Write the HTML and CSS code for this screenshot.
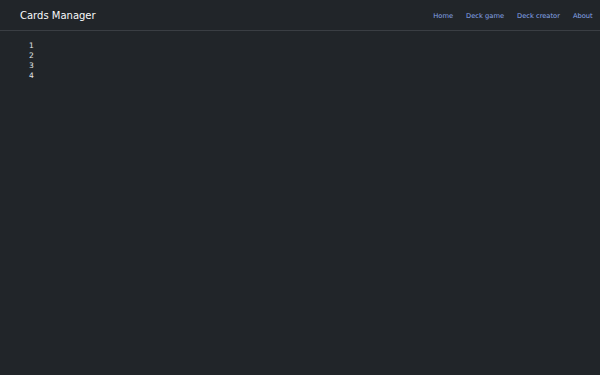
FILE: index.html
```html
<!DOCTYPE html>
<html lang="en">
<head>
<meta charset="utf-8">
<title>Cards Manager</title>
<link rel="stylesheet" href="styles.css">
</head>
<body>
<header class="navbar">
  <a class="brand" href="#">Cards Manager</a>
  <nav class="nav">
    <a class="nav-link" href="#">Home</a>
    <a class="nav-link" href="#">Deck game</a>
    <a class="nav-link" href="#">Deck creator</a>
    <a class="nav-link" href="#">About</a>
  </nav>
</header>
<main class="content">
  <ul class="items">
    <li>1</li>
    <li>2</li>
    <li>3</li>
    <li>4</li>
  </ul>
</main>
</body>
</html>
```

FILE: styles.css
```css
html, body {
  margin: 0;
  padding: 0;
  height: 100%;
}
body {
  background: #212529;
  color: #dee2e6;
  font-family: "DejaVu Sans", sans-serif;
}
.navbar {
  display: flex;
  align-items: center;
  justify-content: space-between;
  height: 30px;
  padding: 0 0.8px 0 20px;
  border-bottom: 1px solid #3a3e43;
}
.brand {
  font-size: 10px;
  color: #f8f9fa;
  text-decoration: none;
}
.nav {
  display: flex;
  align-items: center;
  padding-top: 1px;
}
.nav-link {
  font-size: 6.7px;
  color: #86a5ec;
  text-decoration: none;
  padding: 0 6.5px;
}
.content {
  padding: 10px 0 0 29px;
}
.items {
  list-style: none;
  margin: 0;
  padding: 0;
  font-size: 7.5px;
  line-height: 10px;
  color: #e3e5e8;
}
```
